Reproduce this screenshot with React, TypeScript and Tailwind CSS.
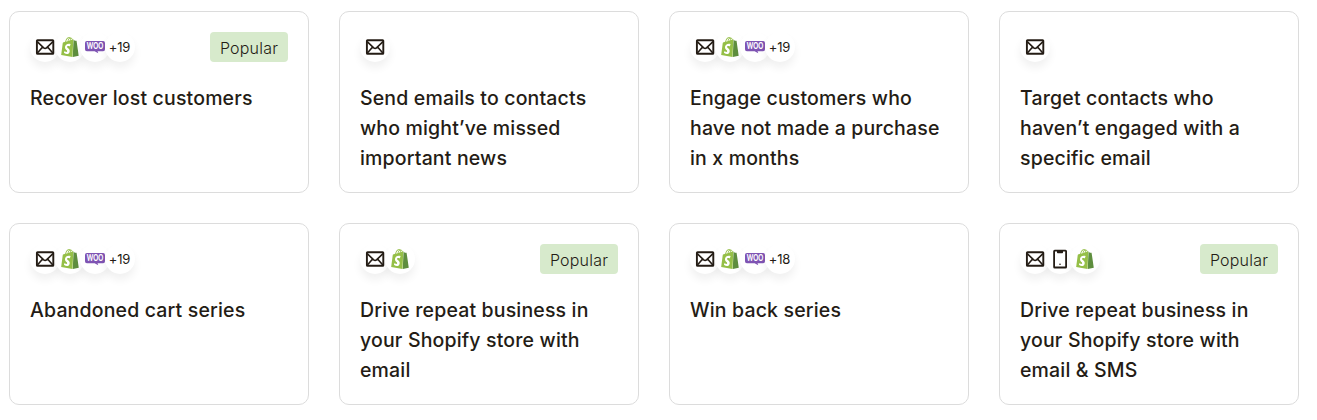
import React from 'react';

type IconName = 'email' | 'sms' | 'shopify' | 'woo';

interface Journey {
  title: string;
  icons: IconName[];
  more?: number;
  popular?: boolean;
}

const journeys: Journey[] = [
  { title: 'Recover lost customers', icons: ['email', 'shopify', 'woo'], more: 19, popular: true },
  { title: 'Send emails to contacts who might’ve missed important news', icons: ['email'] },
  { title: 'Engage customers who have not made a purchase in x months', icons: ['email', 'shopify', 'woo'], more: 19 },
  { title: 'Target contacts who haven’t engaged with a specific email', icons: ['email'] },
  { title: 'Abandoned cart series', icons: ['email', 'shopify', 'woo'], more: 19 },
  { title: 'Drive repeat business in your Shopify store with email', icons: ['email', 'shopify'], popular: true },
  { title: 'Win back series', icons: ['email', 'shopify', 'woo'], more: 18 },
  { title: 'Drive repeat business in your Shopify store with email & SMS', icons: ['email', 'sms', 'shopify'], popular: true },
];

const EmailIcon = () => (
  <svg viewBox="0 0 20 20" className="h-5 w-5" fill="none" stroke="#241c15" strokeWidth="1.9">
    <rect x="1.9" y="3.2" width="16.4" height="13.6" rx="0.6" />
    <path d="M2.2 4.6 L8.7 10.8 Q10.1 12 11.5 10.8 L18 4.6 M2.4 16 L7.4 10.2 M17.8 16 L12.8 10.2" strokeWidth="1.6" />
  </svg>
);

const PhoneIcon = () => (
  <svg viewBox="0 0 20 20" className="h-5 w-5" fill="none" stroke="#241c15" strokeWidth="1.8">
    <rect x="4.1" y="1.6" width="12" height="16.9" rx="0.6" />
    <path d="M7 2h6v1.4q0 .8-.8.8H7.8Q7 4.2 7 3.4z" fill="#241c15" stroke="none" />
    <circle cx="10" cy="15.3" r="0.8" fill="#241c15" stroke="none" />
  </svg>
);

const ShopifyIcon = () => (
  <svg viewBox="0 0 24 24" className="h-5 w-5">
    <path d="M3.3 7 L15.5 4 L15 23 L2 21z" fill="#fff" />
    <path
      fill="#5e8e3e"
      d="M15.337 23.979l7.216-1.561s-2.604-17.613-2.625-17.73c-.018-.116-.114-.192-.211-.192s-1.929-.136-1.929-.136-1.275-1.274-1.439-1.411c-.045-.037-.075-.057-.121-.074l-.914 21.104h.023z"
    />
    <path
      fill="#95bf47"
      d="M11.71 11.305s-.81-.424-1.774-.424c-1.447 0-1.504.906-1.504 1.141 0 1.232 3.24 1.715 3.24 4.629 0 2.295-1.44 3.76-3.406 3.76-2.354 0-3.54-1.465-3.54-1.465l.646-2.086s1.245 1.066 2.28 1.066c.675 0 .975-.545.975-.932 0-1.619-2.654-1.694-2.654-4.359-.034-2.237 1.571-4.416 4.827-4.416 1.257 0 1.875.361 1.875.361l-.945 2.715-.02.01zM11.17.83c.136 0 .271.038.405.135-.984.465-2.064 1.639-2.508 3.992-.656.213-1.293.405-1.889.578C7.697 3.75 8.951.84 11.17.84V.83zm1.235 2.949v.135c-.754.232-1.583.484-2.394.736.466-1.777 1.333-2.645 2.085-2.971.193.501.309 1.176.309 2.1zm.539-2.234c.694.074 1.141.867 1.429 1.755-.349.114-.735.231-1.158.366v-.252c0-.752-.096-1.371-.271-1.871v.002zm2.992 1.289c-.02 0-.06.021-.078.021s-.289.075-.714.21c-.423-1.233-1.176-2.37-2.508-2.37h-.115C12.135.209 11.669 0 11.265 0 8.159 0 6.675 3.877 6.21 5.846c-1.194.365-2.063.636-2.16.674-.675.213-.694.232-.772.87-.075.462-1.83 14.063-1.83 14.063L15.009 24l.927-21.166z"
    />
  </svg>
);

const WooIcon = () => (
  <svg viewBox="0 0 20 20" className="h-5 w-5 overflow-visible">
    <path
      d="M1.9 4h16.2Q20 4 20 5.9v6.4Q20 14.2 18.1 14.2H12.5L13.3 16.2 9.6 14.2H1.9Q0 14.2 0 12.3V5.9Q0 4 1.9 4z"
      fill="#7f54b3"
    />
    <text
      x="1.8"
      y="12.2"
      textLength="16.4"
      lengthAdjust="spacingAndGlyphs"
      className="font-['Lato',sans-serif] text-[8.5px] font-black"
      fill="#fff"
    >
      WOO
    </text>
  </svg>
);

const icons: Record<IconName, React.ReactNode> = {
  email: <EmailIcon />,
  sms: <PhoneIcon />,
  shopify: <ShopifyIcon />,
  woo: <WooIcon />,
};

const Bubble: React.FC<{ children: React.ReactNode }> = ({ children }) => (
  <div className="-mr-[5px] flex h-[30px] w-[30px] items-center justify-center rounded-full bg-white shadow-[0_6px_8px_rgba(0,0,0,0.06)]">
    {children}
  </div>
);

const JourneyCard: React.FC<{ journey: Journey }> = ({ journey }) => (
  <div className="h-[182px] rounded-[10px] border border-[#dcdcdc] bg-white p-5">
    <div className="flex h-[30px] items-center justify-between">
      <div className="flex">
        {journey.icons.map((name) => (
          <Bubble key={name}>{icons[name]}</Bubble>
        ))}
        {journey.more && (
          <Bubble>
            <span className="pt-px pr-px text-[13px] tracking-[-0.2px]">+{journey.more}</span>
          </Bubble>
        )}
      </div>
      {journey.popular && (
        <span className="flex h-[30px] w-[78px] items-center justify-center rounded bg-[#d7eacc] pt-0.5 text-base font-light tracking-[0.2px]">
          Popular
        </span>
      )}
    </div>
    <h3 className="mt-[21px] text-[19.5px] leading-[30px] font-medium tracking-[0.16px]">{journey.title}</h3>
  </div>
);

export default function App() {
  return (
    <div className="grid h-[420px] grid-cols-[repeat(4,300px)] content-start gap-[30px] bg-white pt-[11px] pl-[9px] font-['Inter',sans-serif] text-[#241c15]">
      {journeys.map((journey) => (
        <JourneyCard key={journey.title} journey={journey} />
      ))}
    </div>
  );
}
